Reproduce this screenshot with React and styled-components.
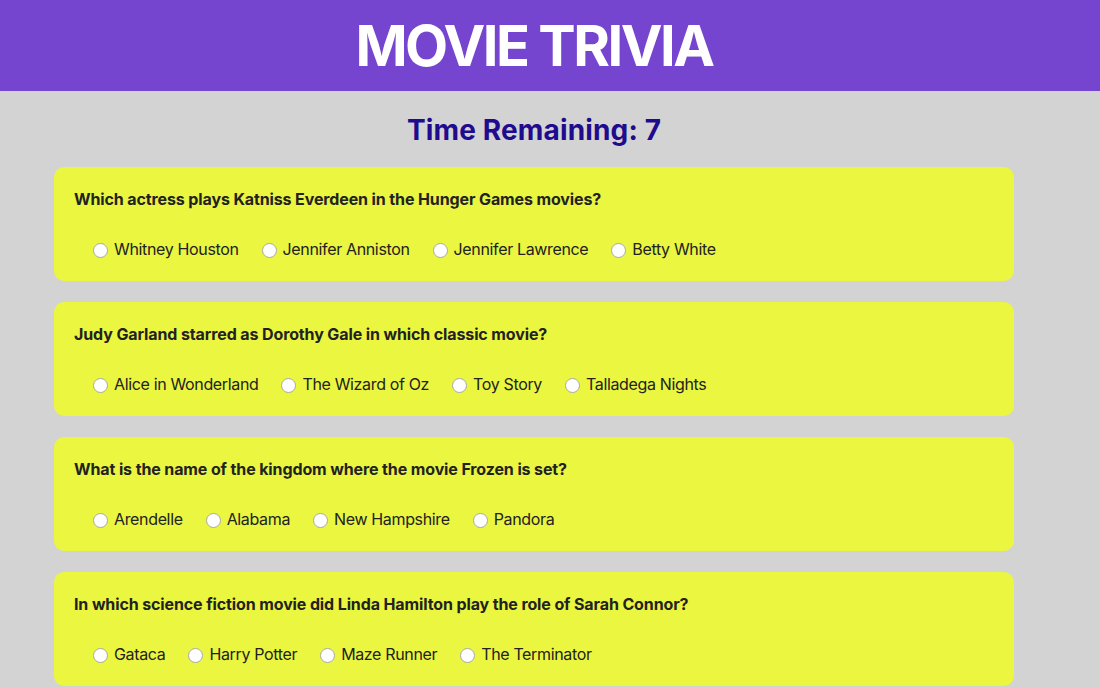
import styled, { createGlobalStyle } from "styled-components";

const GlobalStyle = createGlobalStyle`
  body {
    margin: 0;
    background: #d3d3d3;
    font-family: Inter, "Noto Sans", sans-serif;
  }
`;

const Header = styled.header`
  background: #7645cf;
  height: 91px;
  display: flex;
  align-items: center;
  justify-content: center;
  padding-right: 32px;
`;

const Title = styled.h1`
  margin: 0;
  color: #fff;
  font-size: 56px;
  font-weight: 700;
  letter-spacing: -2.5px;
`;

const Main = styled.main`
  width: 960px;
  margin-left: 54px;
`;

const Timer = styled.h2`
  margin: 20px 0 18px;
  text-align: center;
  color: #200b8e;
  font-size: 28px;
  font-weight: 700;
  line-height: 38px;
  letter-spacing: 0.15px;
`;

const Card = styled.section`
  background: #eaf63f;
  border-radius: 10px;
  padding: 20px;
  margin-bottom: 21px;
`;

const Question = styled.p`
  margin: 0 0 26px;
  font-size: 16px;
  font-weight: 700;
  line-height: 24px;
  color: #222;
  letter-spacing: -0.12px;
`;

const Options = styled.div`
  display: flex;
  gap: 23px;
  padding-left: 19px;
`;

const Option = styled.label`
  display: flex;
  align-items: center;
  gap: 6px;
  font-size: 16px;
  line-height: 24px;
  color: #222;
  letter-spacing: -0.35px;
`;

const Radio = styled.input`
  appearance: none;
  margin: 2px 0 0;
  width: 15px;
  height: 15px;
  border-radius: 50%;
  border: 1px solid #a8a8a8;
  background: #fff;
`;

const questions = [
  {
    q: "Which actress plays Katniss Everdeen in the Hunger Games movies?",
    a: ["Whitney Houston", "Jennifer Anniston", "Jennifer Lawrence", "Betty White"],
  },
  {
    q: "Judy Garland starred as Dorothy Gale in which classic movie?",
    a: ["Alice in Wonderland", "The Wizard of Oz", "Toy Story", "Talladega Nights"],
  },
  {
    q: "What is the name of the kingdom where the movie Frozen is set?",
    a: ["Arendelle", "Alabama", "New Hampshire", "Pandora"],
  },
  {
    q: "In which science fiction movie did Linda Hamilton play the role of Sarah Connor?",
    a: ["Gataca", "Harry Potter", "Maze Runner", "The Terminator"],
  },
];

const App = () => {
  return (
    <>
      <GlobalStyle />
      <Header>
        <Title>MOVIE TRIVIA</Title>
      </Header>
      <Main>
        <Timer>Time Remaining: 7</Timer>
        {questions.map((item, i) => (
          <Card key={i}>
            <Question>{item.q}</Question>
            <Options>
              {item.a.map((ans) => (
                <Option key={ans}>
                  <Radio type="radio" name={"q" + i} />
                  {ans}
                </Option>
              ))}
            </Options>
          </Card>
        ))}
      </Main>
    </>
  );
};

export default App;
